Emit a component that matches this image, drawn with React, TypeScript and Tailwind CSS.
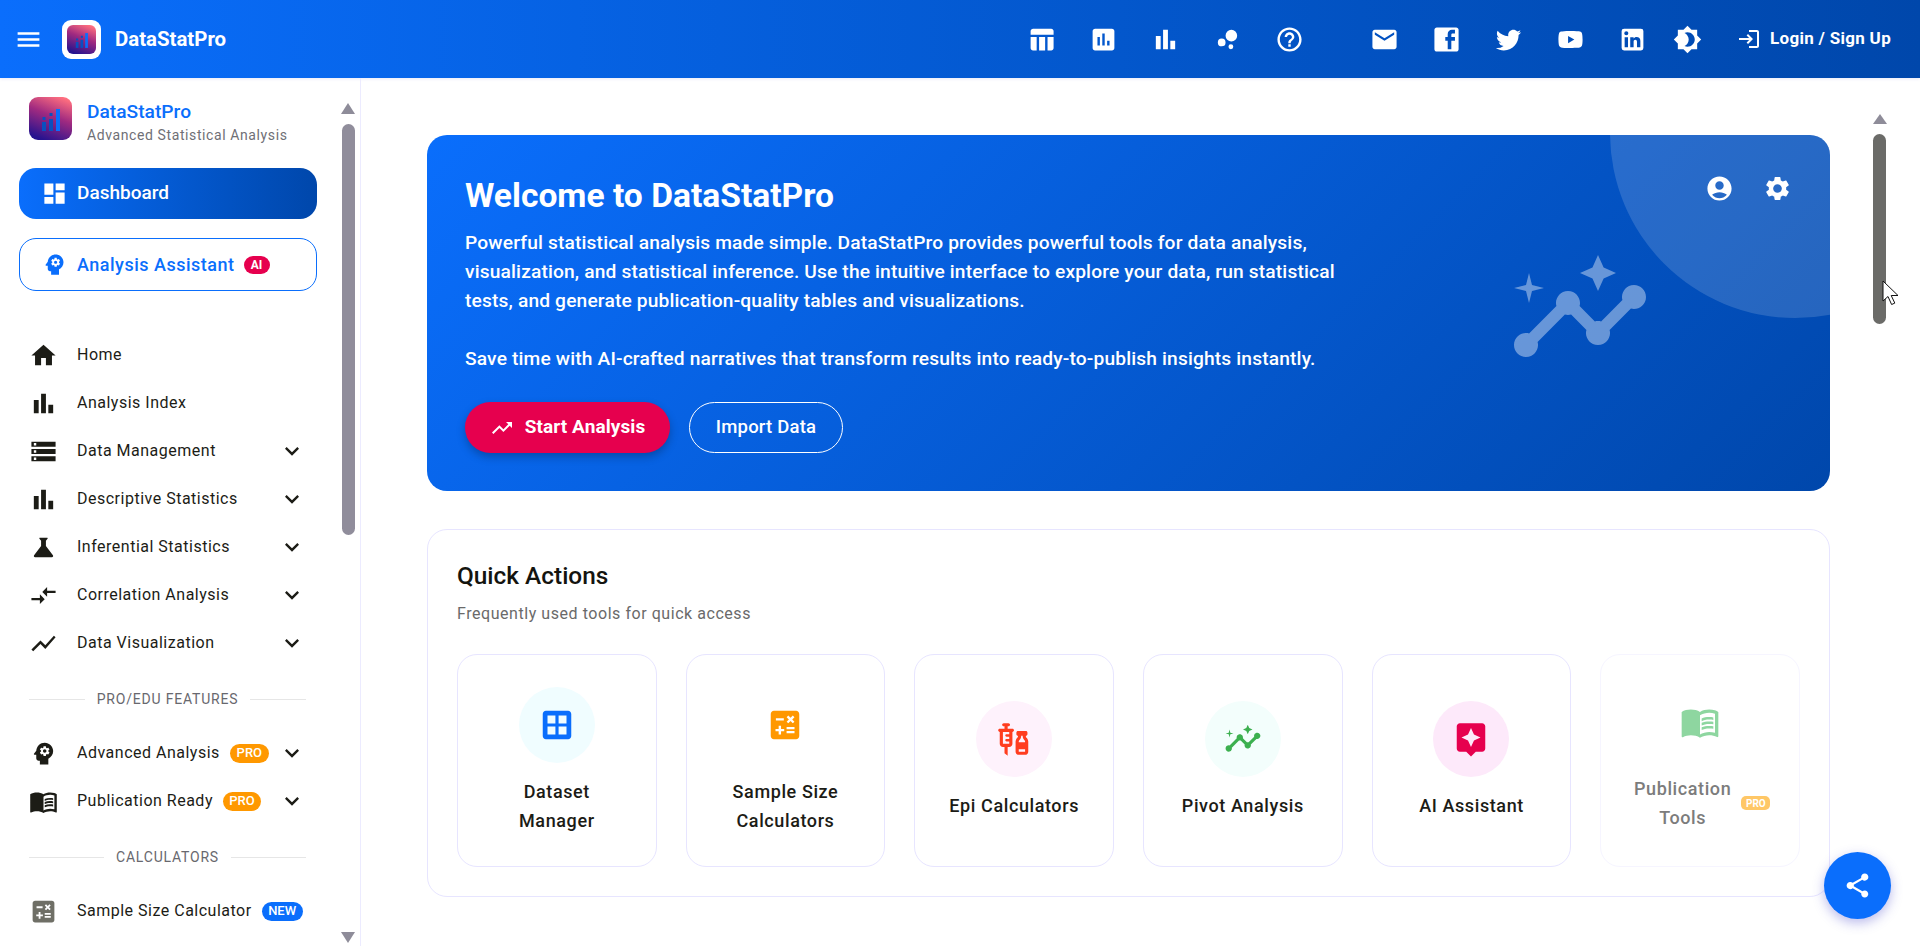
import type { ReactNode } from "react"

const paths = {
  menu: "M3 18h18v-2H3v2zm0-5h18v-2H3v2zm0-7v2h18V6H3z",
  table: "M10 10.02h5V21h-5zM17 21h3c1.1 0 2-.9 2-2v-9h-5v11zm3-18H5c-1.1 0-2 .9-2 2v3h19V5c0-1.1-.9-2-2-2zM3 19c0 1.1.9 2 2 2h3V10H3v9z",
  assessment: "M19 3H5c-1.1 0-2 .9-2 2v14c0 1.1.9 2 2 2h14c1.1 0 2-.9 2-2V5c0-1.1-.9-2-2-2zM9 17H7v-7h2v7zm4 0h-2V7h2v10zm4 0h-2v-4h2v4z",
  bar: "M4 9h4v11H4zm12 4h4v7h-4zm-6-9h4v16h-4z",
  bubble: "M7.2 11.2a3.2 3.2 0 1 0 0 6.4 3.2 3.2 0 0 0 0-6.4zM14.8 16a2 2 0 1 0 0 4 2 2 0 0 0 0-4zM15.2 4a4.8 4.8 0 1 0 0 9.6 4.8 4.8 0 0 0 0-9.6z",
  help: "M11 18h2v-2h-2v2zm1-16C6.48 2 2 6.48 2 12s4.48 10 10 10 10-4.48 10-10S17.52 2 12 2zm0 18c-4.41 0-8-3.59-8-8s3.59-8 8-8 8 3.59 8 8-3.59 8-8 8zm0-14c-2.21 0-4 1.79-4 4h2c0-1.1.9-2 2-2s2 .9 2 2c0 2-3 1.75-3 5h2c0-2.25 3-2.5 3-5 0-2.21-1.79-4-4-4z",
  email: "M20 4H4c-1.1 0-1.99.9-1.99 2L2 18c0 1.1.9 2 2 2h16c1.1 0 2-.9 2-2V6c0-1.1-.9-2-2-2zm0 4l-8 5-8-5V6l8 5 8-5v2z",
  facebook: "M20 2H4c-1.1 0-2 .9-2 2v16c0 1.1.9 2 2 2h16c1.1 0 2-.9 2-2V4c0-1.1-.9-2-2-2zm-1 2v3h-2c-.55 0-1 .45-1 1v2h3v3h-3v7h-3v-7h-2v-3h2V7.5C13 5.57 14.57 4 16.5 4H19z",
  twitter: "M22.46 6c-.77.35-1.6.58-2.46.69.88-.53 1.56-1.37 1.88-2.38-.83.5-1.75.85-2.72 1.05C18.37 4.5 17.26 4 16 4c-2.35 0-4.27 1.92-4.27 4.29 0 .34.04.67.11.98C8.28 9.09 5.11 7.38 3 4.79c-.37.63-.58 1.37-.58 2.15 0 1.49.75 2.81 1.91 3.56-.71 0-1.37-.2-1.95-.5v.03c0 2.08 1.48 3.82 3.44 4.21a4.22 4.22 0 0 1-1.93.07 4.28 4.28 0 0 0 4 2.98 8.521 8.521 0 0 1-5.33 1.84c-.34 0-.68-.02-1.02-.06C3.44 20.29 5.7 21 8.12 21 16 21 20.33 14.46 20.33 8.79c0-.19 0-.37-.01-.56.84-.6 1.56-1.36 2.14-2.23z",
  youtube: "M10 15l5.19-3L10 9v6m11.56-7.83c.13.47.22 1.1.28 1.9.07.8.1 1.49.1 2.09L22 12c0 2.19-.16 3.8-.44 4.83-.25.9-.83 1.48-1.73 1.73-.47.13-1.33.22-2.65.28-1.3.07-2.49.1-3.59.1L12 19c-4.19 0-6.8-.16-7.83-.44-.9-.25-1.48-.83-1.73-1.73-.13-.47-.22-1.1-.28-1.9-.07-.8-.1-1.49-.1-2.09L2 12c0-2.19.16-3.8.44-4.83.25-.9.83-1.48 1.73-1.73.47-.13 1.33-.22 2.65-.28 1.3-.07 2.49-.1 3.59-.1L12 5c4.19 0 6.8.16 7.83.44.9.25 1.48.83 1.73 1.73z",
  linkedin: "M19 3a2 2 0 0 1 2 2v14a2 2 0 0 1-2 2H5a2 2 0 0 1-2-2V5a2 2 0 0 1 2-2h14m-.5 15.5v-5.3a3.26 3.26 0 0 0-3.26-3.26c-.85 0-1.84.52-2.32 1.3v-1.11h-2.79v8.37h2.79v-4.93c0-.77.62-1.4 1.39-1.4a1.4 1.4 0 0 1 1.4 1.4v4.93h2.79M6.88 8.56a1.68 1.68 0 0 0 1.68-1.68c0-.93-.75-1.69-1.68-1.69a1.69 1.69 0 0 0-1.69 1.69c0 .93.76 1.68 1.69 1.68m1.39 9.94v-8.37H5.5v8.37h2.77z",
  brightness: "M20 8.69V4h-4.69L12 .69 8.69 4H4v4.69L.69 12 4 15.31V20h4.69L12 23.31 15.31 20H20v-4.69L23.31 12 20 8.69zM12 18c-.89 0-1.74-.2-2.5-.55C11.56 16.5 13 14.42 13 12s-1.44-4.5-3.5-5.45C10.26 6.2 11.11 6 12 6c3.31 0 6 2.69 6 6s-2.69 6-6 6z",
  login: "M11 7 9.6 8.4l2.6 2.6H2v2h10.2l-2.6 2.6L11 17l5-5-5-5zm9 12h-8v2h8c1.1 0 2-.9 2-2V5c0-1.1-.9-2-2-2h-8v2h8v14z",
  dashboard: "M3 13h8V3H3v10zm0 8h8v-6H3v6zm10 0h8V11h-8v10zm0-18v6h8V3h-8z",
  psychology: "M13 8.57c-.79 0-1.43.64-1.43 1.43s.64 1.43 1.43 1.43 1.43-.64 1.43-1.43-.64-1.43-1.43-1.43zM13 3C9.25 3 6.2 5.94 6.02 9.64L4.1 12.2c-.25.33-.01.8.4.8H6v3c0 1.1.9 2 2 2h1v3h7v-4.68c2.36-1.12 4-3.53 4-6.32 0-3.87-3.13-7-7-7zm3 7c0 .13-.01.26-.02.39l.83.66c.08.06.1.16.05.25l-.8 1.39c-.05.09-.16.12-.24.09l-.99-.4c-.21.16-.43.29-.67.39L14 13.83c-.01.1-.1.17-.2.17h-1.6c-.1 0-.18-.07-.2-.17l-.15-1.06c-.25-.1-.47-.23-.68-.39l-.99.4c-.09.03-.2 0-.25-.09l-.8-1.39c-.05-.08-.03-.19.05-.25l.84-.66c-.01-.13-.02-.26-.02-.39s.02-.27.04-.39l-.85-.66c-.08-.06-.1-.16-.05-.26l.8-1.38c.05-.09.15-.12.24-.09l1 .4c.2-.15.43-.29.67-.39L12 6.17c.02-.1.1-.17.2-.17h1.6c.1 0 .18.07.2.17l.15 1.06c.24.1.46.23.67.39l1-.4c.09-.03.2 0 .24.09l.8 1.38c.05.09.03.2-.05.26l-.85.66c.03.12.04.25.04.39z",
  home: "M10 20v-6h4v6h5v-8h3L12 3 2 12h3v8z",
  storage: "M2 20h20v-4H2v4zm2-3h2v2H4v-2zM2 4v4h20V4H2zm4 3H4V5h2v2zm-4 7h20v-4H2v4zm2-3h2v2H4v-2z",
  science: "M19.8 18.4 14 10.67V6.5l1.35-1.69c.26-.33.03-.81-.39-.81H9.04c-.42 0-.65.48-.39.81L10 6.5v4.17L4.2 18.4c-.49.66-.02 1.6.8 1.6h14c.82 0 1.29-.94.8-1.6z",
  compare: "M9.01 14H2v2h7.01v3L13 15l-3.99-4v3zm5.98-1v-3H22V8h-7.01V5L11 9l3.99 4z",
  showChart: "M3.5 18.49l6-6.01 4 4L22 6.92l-1.41-1.41-7.09 7.97-4-4L2 16.99z",
  trending: "M16 6l2.29 2.29-4.88 4.88-4-4L2 16.59 3.41 18l6-6 4 4 6.3-6.29L22 12V6z",
  book: "M21 5c-1.11-.35-2.33-.5-3.5-.5-1.95 0-4.05.4-5.5 1.5-1.45-1.1-3.55-1.5-5.5-1.5S2.45 4.9 1 6v14.65c0 .25.25.5.5.5.1 0 .15-.05.25-.05C3.1 20.45 5.05 20 6.5 20c1.95 0 4.05.4 5.5 1.5 1.35-.85 3.8-1.5 5.5-1.5 1.65 0 3.35.3 4.75 1.05.1.05.15.05.25.05.25 0 .5-.25.5-.5V6c-.6-.45-1.25-.75-2-1zm0 13.5c-1.1-.35-2.3-.5-3.5-.5-1.7 0-4.15.65-5.5 1.5V8c1.35-.85 3.8-1.5 5.5-1.5 1.2 0 2.4.15 3.5.5v11.5zM17.5 10.5c.88 0 1.73.09 2.5.26V9.24c-.79-.15-1.64-.24-2.5-.24-1.7 0-3.24.29-4.5.83v1.66c1.13-.64 2.7-.99 4.5-.99zM13 12.49v1.66c1.13-.64 2.7-.99 4.5-.99.88 0 1.73.09 2.5.26V11.9c-.79-.15-1.64-.24-2.5-.24-1.7 0-3.24.3-4.5.83zM17.5 14.33c-1.7 0-3.24.29-4.5.83v1.66c1.13-.64 2.7-.99 4.5-.99.88 0 1.73.09 2.5.26v-1.52c-.79-.16-1.64-.24-2.5-.24z",
  calculate: "M19 3H5c-1.1 0-2 .9-2 2v14c0 1.1.9 2 2 2h14c1.1 0 2-.9 2-2V5c0-1.1-.9-2-2-2zm-5.97 4.06L14.09 6l1.41 1.41L16.91 6l1.06 1.06-1.41 1.41 1.41 1.41-1.06 1.06-1.41-1.4-1.41 1.41-1.06-1.06 1.41-1.41-1.41-1.42zm-6.78.66h5v1.5h-5v-1.5zM11.5 16h-2v2H8v-2H6v-1.5h2v-2h1.5v2h2V16zm6.5 1.25h-5v-1.5h5v1.5zm0-2.5h-5v-1.5h5v1.5z",
  account: "M12 2C6.48 2 2 6.48 2 12s4.48 10 10 10 10-4.48 10-10S17.52 2 12 2zm0 4c1.93 0 3.5 1.57 3.5 3.5S13.93 13 12 13s-3.5-1.57-3.5-3.5S10.07 6 12 6zm0 14c-2.03 0-4.43-.82-6.14-2.88C7.55 15.8 9.68 15 12 15s4.45.8 6.14 2.12C16.43 19.18 14.03 20 12 20z",
  settings: "M19.14 12.94c.04-.3.06-.61.06-.94 0-.32-.02-.64-.07-.94l2.03-1.58c.18-.14.23-.41.12-.61l-1.92-3.32c-.12-.22-.37-.29-.59-.22l-2.39.96c-.5-.38-1.03-.7-1.62-.94l-.36-2.54c-.04-.24-.24-.41-.48-.41h-3.84c-.24 0-.43.17-.47.41l-.36 2.54c-.59.24-1.13.57-1.62.94l-2.39-.96c-.22-.08-.47 0-.59.22L2.74 8.87c-.12.21-.08.47.12.61l2.03 1.58c-.05.3-.09.63-.09.94s.02.64.07.94l-2.03 1.58c-.18.14-.23.41-.12.61l1.92 3.32c.12.22.37.29.59.22l2.39-.96c.5.38 1.03.7 1.62.94l.36 2.54c.05.24.24.41.48.41h3.84c.24 0 .44-.17.47-.41l.36-2.54c.59-.24 1.13-.56 1.62-.94l2.39.96c.22.08.47 0 .59-.22l1.92-3.32c.12-.22.07-.47-.12-.61l-2.01-1.58zM12 15.6c-1.98 0-3.6-1.62-3.6-3.6s1.62-3.6 3.6-3.6 3.6 1.62 3.6 3.6-1.62 3.6-3.6 3.6z",
  insights: "M21 8c-1.45 0-2.26 1.44-1.93 2.51l-3.55 3.56c-.3-.09-.74-.09-1.04 0l-2.55-2.55C12.27 10.45 11.46 9 10 9c-1.45 0-2.27 1.44-1.93 2.52l-4.56 4.55C2.44 15.74 1 16.55 1 18c0 1.1.9 2 2 2 1.45 0 2.26-1.44 1.93-2.51l4.55-4.56c.3.09.74.09 1.04 0l2.55 2.55C12.73 16.55 13.54 18 15 18c1.45 0 2.27-1.44 1.93-2.52l3.56-3.55c1.07.33 2.51-.48 2.51-1.93 0-1.1-.9-2-2-2zM15 9l.94-2.07L18 6l-2.06-.93L15 3l-.92 2.07L12 6l2.08.93zM3.5 11 4 9l2-.5L4 8l-.5-2L3 8l-2 .5L3 9z",
  vaccines: "M11 5.5H8V4h.5c.55 0 1-.45 1-1s-.45-1-1-1h-3c-.55 0-1 .45-1 1s.45 1 1 1H6v1.5H3c-.55 0-1 .45-1 1s.45 1 1 1V15c0 1.1.9 2 2 2h1v4l2 1.5V17h1c1.1 0 2-.9 2-2V7.5c.55 0 1-.45 1-1s-.45-1-1-1zM9 9H7.25c-.41 0-.75.34-.75.75s.34.75.75.75H9v1.5H7.25c-.41 0-.75.34-.75.75s.34.75.75.75H9V15H5V7.5h4V9zm10.5 1.5V10c.55 0 1-.45 1-1V8c0-.55-.45-1-1-1h-5c-.55 0-1 .45-1 1v1c0 .55.45 1 1 1v.5c0 .5-1.5 1.16-1.5 3V20c0 1.1.9 2 2 2h4c1.1 0 2-.9 2-2v-6.5c0-1.84-1.5-2.5-1.5-3zm-3 0V10h1v.5c0 1.6 1.5 2 1.5 3v.5h-4v-.5c0-1 1.5-1.4 1.5-3zM15 20v-1.5h4V20h-4z",
  assistant: "M19 2H5c-1.1 0-2 .9-2 2v14c0 1.1.9 2 2 2h4l3 3 3-3h4c1.1 0 2-.9 2-2V4c0-1.1-.9-2-2-2zm-5.12 10.88L12 17l-1.88-4.12L6 11l4.12-1.88L12 5l1.88 4.12L18 11l-4.12 1.88z",
  grid: "M19 3H5c-1.1 0-2 .9-2 2v14c0 1.1.9 2 2 2h14c1.1 0 2-.9 2-2V5c0-1.1-.9-2-2-2zM6 6h5v5H6V6zm7 0h5v5h-5V6zM6 13h5v5H6v-5zm7 0h5v5h-5v-5z",
  expand: "M16.59 8.59 12 13.17 7.41 8.59 6 10l6 6 6-6z",
  share: "M18 16.08c-.76 0-1.44.3-1.96.77L8.91 12.7c.05-.23.09-.46.09-.7s-.04-.47-.09-.7l7.05-4.11c.54.5 1.25.81 2.04.81 1.66 0 3-1.34 3-3s-1.34-3-3-3-3 1.34-3 3c0 .24.04.47.09.7L8.04 9.81C7.5 9.31 6.79 9 6 9c-1.66 0-3 1.34-3 3s1.34 3 3 3c.79 0 1.5-.31 2.04-.81l7.12 4.16c-.05.21-.08.43-.08.65 0 1.61 1.31 2.92 2.92 2.92s2.92-1.31 2.92-2.92-1.31-2.92-2.92-2.92z",
}

type IconName = keyof typeof paths

function Icon({ name, className = "w-[29px] h-[29px]" }: { name: IconName; className?: string }) {
  return (
    <svg viewBox="0 0 24 24" fill="currentColor" fillRule="evenodd" className={`shrink-0 ${className}`}>
      <path d={paths[name]} />
    </svg>
  )
}

function Logo({ id, className }: { id: string; className: string }) {
  return (
    <svg viewBox="0 0 43 43" className={className}>
      <defs>
        <linearGradient id={id} x1="0.75" y1="0" x2="0.35" y2="1">
          <stop offset="0" stopColor="#ff6f7f" />
          <stop offset="0.45" stopColor="#a02a80" />
          <stop offset="1" stopColor="#26138f" />
        </linearGradient>
      </defs>
      <rect width="43" height="43" rx="9" fill={`url(#${id})`} />
      <rect x="13" y="25" width="4" height="9" fill="#0a4fc0" />
      <rect x="20" y="22" width="4" height="12" fill="#0a4fc0" />
      <rect x="27" y="12" width="4" height="22" fill="#0a6efc" />
      <rect x="13.5" y="20" width="3" height="3" fill="#0a4fc0" />
      <rect x="20.5" y="16" width="3" height="3" fill="#0a4fc0" />
    </svg>
  )
}

const headerIcons: IconName[] = ["table", "assessment", "bar", "bubble", "help"]
const socialIcons: IconName[] = ["email", "facebook", "twitter", "youtube", "linkedin"]

function Header() {
  return (
    <header className="h-[78px] shrink-0 flex items-center bg-gradient-to-r from-[#0a6efc] to-[#0047ab] text-white shadow-[0_1px_3px_rgba(80,80,200,0.12)]">
      <div className="w-[58px] pl-[14px]">
        <Icon name="menu" />
      </div>
      <div className="ml-[4px] w-[39px] h-[39px] bg-white rounded-[9px] flex items-center justify-center">
        <Logo id="logo-head" className="w-[29px] h-[29px]" />
      </div>
      <span className="ml-[14px] text-[20.4px] font-bold">DataStatPro</span>
      <div className="ml-auto flex items-center gap-[33px] mr-[34px]">
        {headerIcons.map(n => (
          <Icon key={n} name={n} />
        ))}
      </div>
      <div className="ml-[32px] flex items-center gap-[33px]">
        {socialIcons.map(n => (
          <Icon key={n} name={n} />
        ))}
      </div>
      <div className="ml-[26px]">
        <Icon name="brightness" />
      </div>
      <div className="ml-[35px] mr-[29px] flex items-center gap-[9px]">
        <Icon name="login" className="w-[24px] h-[24px]" />
        <span className="text-[17px] font-bold tracking-[0.3px]">Login / Sign Up</span>
      </div>
    </header>
  )
}

function Badge({ color, className = "", children }: { color: string; className?: string; children: ReactNode }) {
  return (
    <span className={`h-[19px] inline-flex items-center justify-center rounded-full text-white text-[13px] font-medium ${color} ${className}`}>
      {children}
    </span>
  )
}

function NavItem({ icon, label, chevron, badge, iconColor = "" }: { icon: IconName; label?: string; chevron?: boolean; badge?: ReactNode; iconColor?: string }) {
  return (
    <div className="h-[48px] flex items-center text-[#1c1c16]">
      <span className={iconColor}>
        <Icon name={icon} />
      </span>
      {label && <span className="ml-[19px] text-[16px] tracking-[0.5px] whitespace-nowrap">{label}</span>}
      {badge && <span className="ml-[10px] flex">{badge}</span>}
      {chevron && (
        <span className="ml-auto">
          <Icon name="expand" className="w-[28px] h-[28px]" />
        </span>
      )}
    </div>
  )
}

function SectionLabel({ children }: { children: string }) {
  return (
    <div className="h-[62px] flex items-center gap-[12px] pt-[2px]">
      <div className="flex-1 border-t border-[#e6e6e6]" />
      <span className="text-[14px] tracking-[0.8px] text-[#68686e]">{children}</span>
      <div className="flex-1 border-t border-[#e6e6e6]" />
    </div>
  )
}

function Sidebar() {
  return (
    <aside className="w-[361px] shrink-0 border-r border-[#ecebff] flex overflow-hidden">
      <div className="w-[341px] shrink-0">
        <div className="pt-[19px] pl-[29px] flex items-start">
          <Logo id="logo-side" className="w-[43px] h-[43px]" />
          <div className="ml-[15px] mt-[2px]">
            <div className="text-[19.2px] leading-[26px] font-medium text-[#0a6efc]">DataStatPro</div>
            <div className="text-[14px] leading-[21px] tracking-[0.6px] text-[#6f6f76]">Advanced Statistical Analysis</div>
          </div>
        </div>

        <div className="mt-[22px] ml-[19px] w-[298px] h-[51px] rounded-[17px] bg-gradient-to-r from-[#0a6efc] to-[#0047ab] text-white flex items-center pl-[22px]">
          <Icon name="dashboard" className="w-[27px] h-[27px]" />
          <span className="ml-[9px] text-[19px] font-medium">Dashboard</span>
        </div>

        <div className="mt-[19px] ml-[19px] w-[298px] h-[53px] rounded-[17px] border border-[#0a6efc] text-[#0a6efc] flex items-center pl-[21px]">
          <Icon name="psychology" className="w-[27px] h-[27px]" />
          <span className="ml-[9px] text-[18px] font-medium tracking-[0.5px]">Analysis Assistant</span>
          <span className="ml-[9px] w-[26px] h-[18px] rounded-full bg-[#e6004e] text-white text-[12px] font-bold flex items-center justify-center">AI</span>
        </div>

        <div className="mt-[40px] ml-[29px] w-[277px]">
          <NavItem icon="home" label="Home" />
          <NavItem icon="bar" label="Analysis Index" />
          <NavItem icon="storage" label="Data Management" chevron />
          <NavItem icon="bar" label="Descriptive Statistics" chevron />
          <NavItem icon="science" label="Inferential Statistics" chevron />
          <NavItem icon="compare" label="Correlation Analysis" chevron />
          <NavItem icon="showChart" label="Data Visualization" chevron />
          <SectionLabel>PRO/EDU FEATURES</SectionLabel>
          <NavItem icon="psychology" label="Advanced Analysis" chevron badge={<Badge color="bg-[#ff9800]" className="w-[39px]">PRO</Badge>} />
          <NavItem icon="book" label="Publication Ready" chevron badge={<Badge color="bg-[#ff9800]" className="w-[38px]">PRO</Badge>} />
          <SectionLabel>CALCULATORS</SectionLabel>
          <NavItem icon="calculate" iconColor="text-[#6f6f66]" label="Sample Size Calculator" badge={<Badge color="bg-[#0a6efc]" className="w-[41px]">NEW</Badge>} />
          <NavItem icon="vaccines" />
        </div>
      </div>

      <div className="w-[14px] shrink-0 flex flex-col items-center">
        <div className="mt-[25px] w-0 h-0 border-x-[7px] border-x-transparent border-b-[11px] border-b-[#8e8c99]" />
        <div className="mt-[10px] w-[13px] h-[411px] rounded-full bg-[#908d9b]" />
        <div className="mt-[397px] w-0 h-0 border-x-[7px] border-x-transparent border-t-[11px] border-t-[#8e8c99]" />
      </div>
    </aside>
  )
}

function Hero() {
  return (
    <section className="relative h-[356px] rounded-[20px] overflow-hidden bg-[linear-gradient(135deg,#0a6efc,#0047ab)] text-white pl-[38px] pt-[40px]">
      <div className="absolute top-[-187px] right-[-150px] w-[370px] h-[370px] rounded-full bg-white/15" />
      <div className="absolute top-[102px] right-[178px] text-white/40">
        <Icon name="insights" className="w-[144px] h-[144px]" />
      </div>
      <div className="absolute top-[39px] right-[38px] flex items-center gap-[29px]">
        <Icon name="account" />
        <Icon name="settings" />
      </div>

      <h1 className="relative text-[33.6px] leading-[42px] font-bold">Welcome to DataStatPro</h1>
      <p className="relative mt-[11px] w-[890px] text-[19.2px] tracking-[0.15px] leading-[29px] font-medium">
        Powerful statistical analysis made simple. DataStatPro provides powerful tools for data analysis, visualization, and statistical inference. Use the intuitive interface to explore your data, run statistical tests, and generate publication-quality tables and visualizations.
        <br />
        <br />
        Save time with AI-crafted narratives that transform results into ready-to-publish insights instantly.
      </p>
      <div className="relative mt-[29px] flex items-center gap-[19px]">
        <div className="h-[51px] w-[205px] rounded-full bg-[#e6004e] shadow-[0_4px_8px_rgba(0,0,0,0.25)] flex items-center justify-center gap-[11px]">
          <Icon name="trending" className="w-[24px] h-[24px]" />
          <span className="text-[19px] font-bold tracking-[0.1px]">Start Analysis</span>
        </div>
        <div className="h-[51px] w-[154px] rounded-full border border-white flex items-center justify-center text-[18.5px] font-medium tracking-[0.2px]">
          Import Data
        </div>
      </div>
    </section>
  )
}

type Action = { icon: IconName; label: ReactNode; fg: string; circle: string }

const actions: Action[] = [
  { icon: "grid", label: <>Dataset<br />Manager</>, fg: "text-[#0a6efc]", circle: "bg-[#f0fdff]" },
  { icon: "calculate", label: <>Sample Size<br />Calculators</>, fg: "text-[#ff9800]", circle: "bg-white" },
  { icon: "vaccines", label: "Epi Calculators", fg: "text-[#ff3d1f]", circle: "bg-[#fef2fc]" },
  { icon: "insights", label: "Pivot Analysis", fg: "text-[#3cb04f]", circle: "bg-[#f3fefc]" },
  { icon: "assistant", label: "AI Assistant", fg: "text-[#e6004e]", circle: "bg-[#fde9fa]" },
]

function ActionCard({ icon, label, fg, circle }: Action) {
  return (
    <div className="h-[213px] rounded-[20px] border border-[#e7e5ff] flex flex-col items-center justify-center">
      <div className={`w-[76px] h-[76px] rounded-full flex items-center justify-center ${circle} ${fg}`}>
        <Icon name={icon} className="w-[38px] h-[38px]" />
      </div>
      <div className="mt-[14px] text-center text-[18px] leading-[29px] font-medium tracking-[0.6px] text-[#1c1c16]">{label}</div>
    </div>
  )
}

function QuickActions() {
  return (
    <section className="mt-[38px] h-[368px] rounded-[20px] border border-[#e7e5ff] px-[29px] pt-[31px]">
      <h2 className="text-[24.4px] leading-[30px] font-medium text-[#14140f]">Quick Actions</h2>
      <p className="mt-[11px] text-[16px] leading-[24px] tracking-[0.55px] text-[#6a6a6a]">Frequently used tools for quick access</p>
      <div className="mt-[28px] grid grid-cols-6 gap-[29px]">
        {actions.map(a => (
          <ActionCard key={a.icon} {...a} />
        ))}
        <div className="h-[213px] rounded-[20px] border border-[#f6f5ff] flex flex-col items-center justify-center pb-[5px]">
          <div className="w-[76px] h-[76px] flex items-center justify-center text-[#8ed6a0]">
            <Icon name="book" className="w-[40px] h-[40px]" />
          </div>
          <div className="mt-[14px] pl-[4px] flex items-center">
            <div className="text-center text-[18px] leading-[29px] font-medium tracking-[0.6px] text-[#7c7c7c]">Publication<br />Tools</div>
            <span className="ml-[10px] w-[29px] h-[14px] rounded-[5px] bg-[#ffc766] text-white text-[10px] font-bold flex items-center justify-center">PRO</span>
          </div>
        </div>
      </div>
    </section>
  )
}

export default function App() {
  return (
    <div className="relative h-screen flex flex-col overflow-hidden bg-white [font-family:Roboto,sans-serif]">
      <Header />
      <div className="flex-1 flex min-h-0">
        <Sidebar />
        <main className="flex-1 flex min-w-0">
          <div className="flex-1 min-w-0 pl-[66px] pr-[43px] pt-[57px]">
            <Hero />
            <QuickActions />
          </div>
          <div className="w-[13px] mr-[34px] shrink-0 flex flex-col items-center">
            <div className="mt-[36px] w-0 h-0 border-x-[7px] border-x-transparent border-b-[10px] border-b-[#8e8c99]" />
            <div className="mt-[10px] w-[13px] h-[190px] rounded-full bg-[#6b6b68]" />
          </div>
        </main>
      </div>

      {/* share button */}
      <div className="absolute right-[29px] bottom-[27px] w-[67px] h-[67px] rounded-full bg-[#0a6efc] text-white flex items-center justify-center shadow-[0_4px_12px_rgba(60,60,200,0.35)]">
        <Icon name="share" />
      </div>

      {/* mouse pointer */}
      <svg viewBox="0 0 18 27" className="absolute left-[1882px] top-[280px] w-[18px] h-[27px]">
        <path d="M1 1v20l5-4.5 3.6 8 3.2-1.4L9.2 15.5H16z" fill="#fff" stroke="#111" strokeWidth="1" />
      </svg>
    </div>
  )
}
